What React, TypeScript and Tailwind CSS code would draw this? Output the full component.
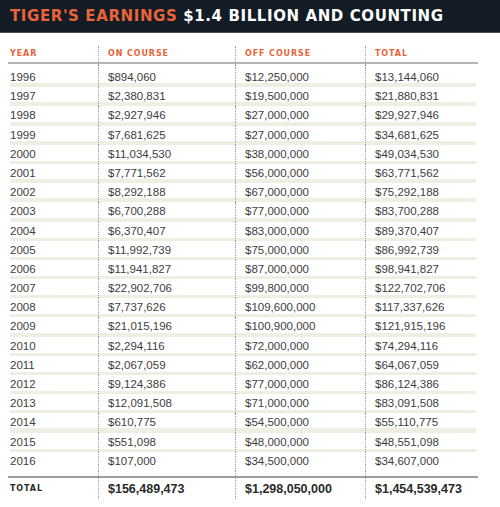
const rows: [string, string, string, string][] = [
  ["1996", "$894,060", "$12,250,000", "$13,144,060"],
  ["1997", "$2,380,831", "$19,500,000", "$21,880,831"],
  ["1998", "$2,927,946", "$27,000,000", "$29,927,946"],
  ["1999", "$7,681,625", "$27,000,000", "$34,681,625"],
  ["2000", "$11,034,530", "$38,000,000", "$49,034,530"],
  ["2001", "$7,771,562", "$56,000,000", "$63,771,562"],
  ["2002", "$8,292,188", "$67,000,000", "$75,292,188"],
  ["2003", "$6,700,288", "$77,000,000", "$83,700,288"],
  ["2004", "$6,370,407", "$83,000,000", "$89,370,407"],
  ["2005", "$11,992,739", "$75,000,000", "$86,992,739"],
  ["2006", "$11,941,827", "$87,000,000", "$98,941,827"],
  ["2007", "$22,902,706", "$99,800,000", "$122,702,706"],
  ["2008", "$7,737,626", "$109,600,000", "$117,337,626"],
  ["2009", "$21,015,196", "$100,900,000", "$121,915,196"],
  ["2010", "$2,294,116", "$72,000,000", "$74,294,116"],
  ["2011", "$2,067,059", "$62,000,000", "$64,067,059"],
  ["2012", "$9,124,386", "$77,000,000", "$86,124,386"],
  ["2013", "$12,091,508", "$71,000,000", "$83,091,508"],
  ["2014", "$610,775", "$54,500,000", "$55,110,775"],
  ["2015", "$551,098", "$48,000,000", "$48,551,098"],
  ["2016", "$107,000", "$34,500,000", "$34,607,000"],
];

const grid = "grid grid-cols-[88px_137px_130px_1fr]";
const divider = "border-l border-dotted border-[#9a9a9a] pl-[9px]";

const App = () => {
  return (
    <div className="w-[500px] h-[507px] bg-white overflow-hidden">
      <div className="h-[33px] bg-[#131c25] flex items-center pl-[10px] border-b border-[#4a5058]">
        <h1 className="font-['DejaVu_Sans',sans-serif] font-bold text-[15px] leading-none tracking-[0.6px] whitespace-nowrap">
          <span className="text-[#e8643a]">TIGER'S EARNINGS</span>{" "}
          <span className="text-white">$1.4 BILLION AND COUNTING</span>
        </h1>
      </div>

      <div className="ml-[10px] w-[466px] mt-[13px]">
        {/* column heads */}
        <div className={`${grid} h-[16px] font-['DejaVu_Sans',sans-serif] font-bold text-[8px] tracking-[0.9px] text-[#e8643a] leading-[16px]`}>
          <div>YEAR</div>
          <div className={divider}>ON COURSE</div>
          <div className={divider}>OFF COURSE</div>
          <div className={divider}>TOTAL</div>
        </div>
        <div className="h-[2px] bg-[#b4b4b4] -ml-[2px] w-[470px]" />
        <div className={`${grid} h-[4px]`}>
          <div />
          <div className={divider} />
          <div className={divider} />
          <div className={divider} />
        </div>

        {/* yearly rows */}
        {rows.map((r, i) => (
          <div
            key={r[0]}
            className={`${grid} h-[19.2px] font-['Liberation_Sans',Arial,sans-serif] text-[11.5px] text-[#3d3d3d] leading-[14px] ${
              i < rows.length - 1
                ? "bg-[linear-gradient(to_bottom,transparent_15.5px,#eeeee2_15.5px,#eeeee2_19.2px)]"
                : ""
            }`}
          >
            <div className="pt-[2px]">{r[0]}</div>
            <div className={`${divider} pt-[2px]`}>{r[1]}</div>
            <div className={`${divider} pt-[2px]`}>{r[2]}</div>
            <div className={`${divider} pt-[2px]`}>{r[3]}</div>
          </div>
        ))}

        <div className={`${grid} h-[5px]`}>
          <div />
          <div className={divider} />
          <div className={divider} />
          <div className={divider} />
        </div>
        <div className="h-[2px] bg-[#9e9e9e] -ml-[2px] w-[470px]" />

        {/* totals */}
        <div className={`${grid} h-[18px] items-center text-[#2a2a2a]`}>
          <div className="font-['DejaVu_Sans',sans-serif] font-bold text-[8px] tracking-[0.9px] pt-[2px]">TOTAL</div>
          <div className={`${divider} font-['Liberation_Sans',Arial,sans-serif] font-bold text-[12.5px] h-full flex items-center pt-[2px]`}>$156,489,473</div>
          <div className={`${divider} font-['Liberation_Sans',Arial,sans-serif] font-bold text-[12.5px] h-full flex items-center pt-[2px]`}>$1,298,050,000</div>
          <div className={`${divider} font-['Liberation_Sans',Arial,sans-serif] font-bold text-[12.5px] h-full flex items-center pt-[2px]`}>$1,454,539,473</div>
        </div>
      </div>
    </div>
  );
};

export default App;
